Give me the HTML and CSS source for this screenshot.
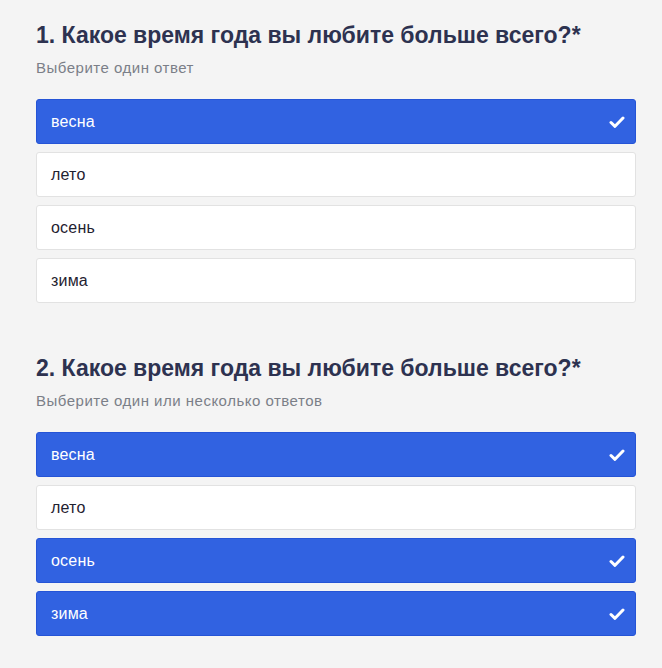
FILE: index.html
```html
<!DOCTYPE html>
<html lang="ru">
<head>
    <meta charset="UTF-8">
    <meta name="viewport" content="width=device-width, initial-scale=1.0">
    <title>Опрос</title>
    <link rel="stylesheet" href="styles.css">
</head>
<body>
    <div class="survey">
        <div class="question">
            <h2 class="question-title">1. Какое время года вы любите больше всего?*</h2>
            <p class="question-hint">Выберите один ответ</p>
            <div class="options">
                <div class="option selected">весна <span class="check"><svg viewBox="0 0 16 16" width="16" height="16"><path d="M2 8.5l4 3.8L14 4" fill="none" stroke="#fff" stroke-width="3" stroke-linecap="round" stroke-linejoin="round"/></svg></span></div>
                <div class="option">лето</div>
                <div class="option">осень</div>
                <div class="option">зима</div>
            </div>
        </div>

        <div class="question">
            <h2 class="question-title">2. Какое время года вы любите больше всего?*</h2>
            <p class="question-hint">Выберите один или несколько ответов</p>
            <div class="options">
                <div class="option selected">весна <span class="check"><svg viewBox="0 0 16 16" width="16" height="16"><path d="M2 8.5l4 3.8L14 4" fill="none" stroke="#fff" stroke-width="3" stroke-linecap="round" stroke-linejoin="round"/></svg></span></div>
                <div class="option">лето</div>
                <div class="option selected">осень <span class="check"><svg viewBox="0 0 16 16" width="16" height="16"><path d="M2 8.5l4 3.8L14 4" fill="none" stroke="#fff" stroke-width="3" stroke-linecap="round" stroke-linejoin="round"/></svg></span></div>
                <div class="option selected">зима <span class="check"><svg viewBox="0 0 16 16" width="16" height="16"><path d="M2 8.5l4 3.8L14 4" fill="none" stroke="#fff" stroke-width="3" stroke-linecap="round" stroke-linejoin="round"/></svg></span></div>
            </div>
        </div>
    </div>
</body>
</html>
```

FILE: styles.css
```css
body {
    margin: 0;
    background: #f4f4f4;
    font-family: "Liberation Sans", Arial, sans-serif;
    color: #2c3148;
}
.survey {
    width: 600px;
    padding: 21px 26px 20px 36px;
}
.question + .question {
    margin-top: 51px;
}
.question-title {
    margin: 0;
    font-size: 23px;
    line-height: 28px;
    font-weight: bold;
    color: #2d3250;
}
.question-hint {
    margin: 9px 0 0;
    font-size: 15px;
    line-height: 20px;
    letter-spacing: 0.5px;
    color: #7b7f88;
}
.options {
    display: flex;
    flex-direction: column;
    gap: 8px;
    margin-top: 21px;
}
.option {
    display: flex;
    align-items: center;
    justify-content: space-between;
    height: 43px;
    padding: 0 10px 0 14px;
    background: #fff;
    border: 1px solid #e2e2e2;
    border-radius: 3px;
    font-size: 16px;
    letter-spacing: 0.2px;
    color: #1f2230;
}
.option.selected {
    background: #3162e1;
    border-color: #2554d6;
    color: #fff;
}
.check {
    display: flex;
}
```
